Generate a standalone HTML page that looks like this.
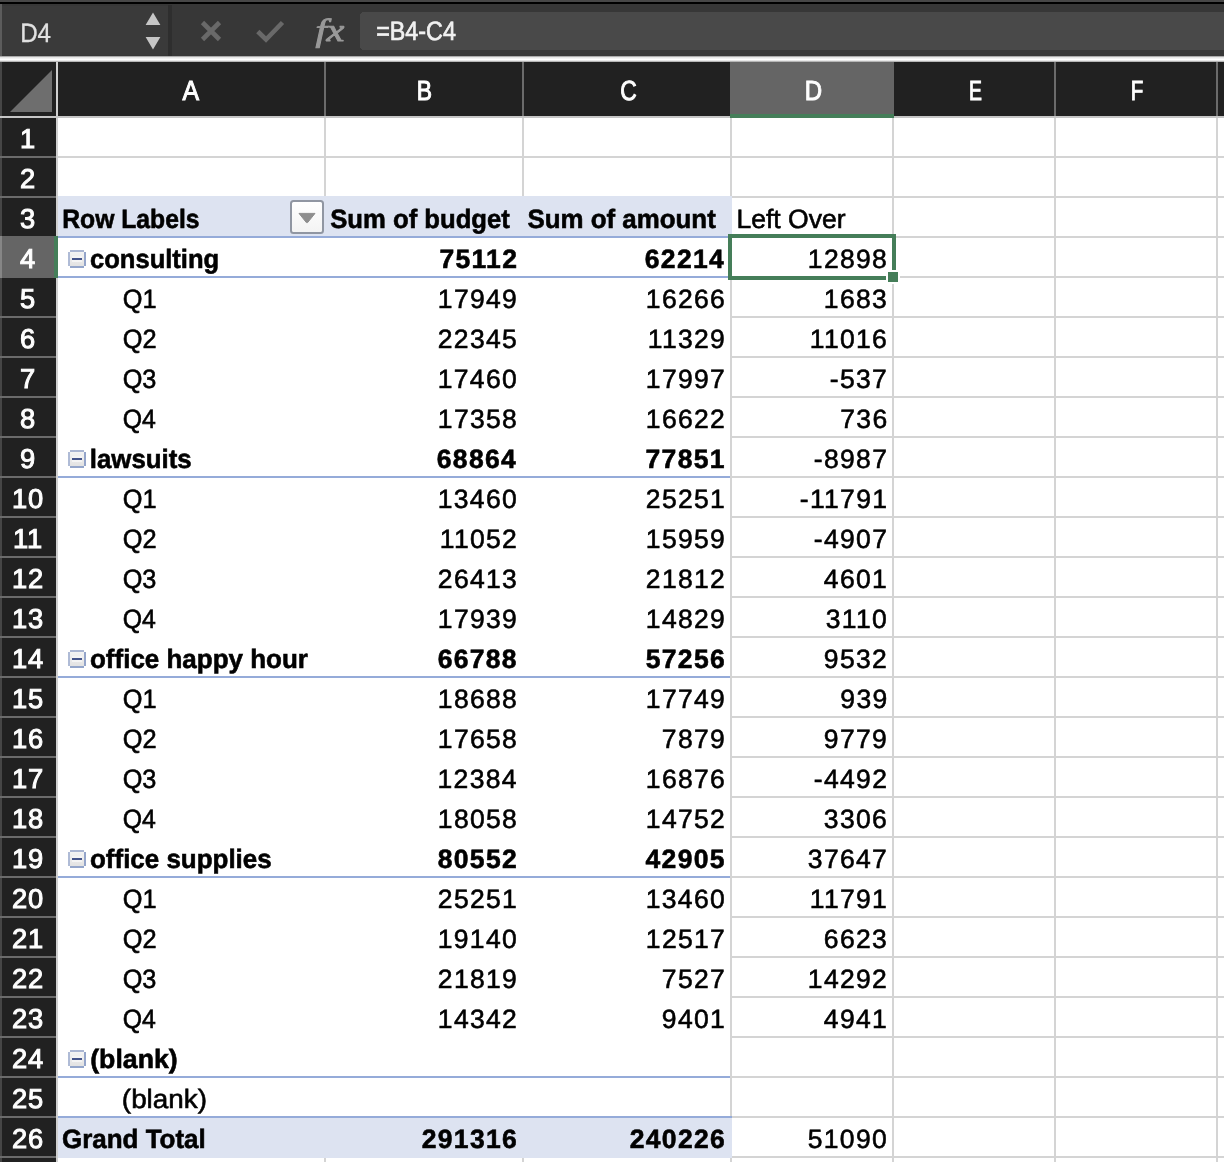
<!DOCTYPE html>
<html lang="en"><head><meta charset="utf-8"><title>Pivot table - Left Over</title>
<style>
html,body{margin:0;padding:0;background:#fff}
body{width:1224px;height:1162px;overflow:hidden;font-family:'Liberation Sans', sans-serif}
svg{display:block}
text{white-space:pre}
.b{font-weight:700}
</style></head><body>
<svg width="1224" height="1162" viewBox="0 0 1224 1162" font-family="'Liberation Sans', sans-serif" text-rendering="geometricPrecision">
<defs>
<linearGradient id="band" x1="0" y1="0" x2="0" y2="1"><stop offset="0" stop-color="#8c8c8c"/><stop offset="0.25" stop-color="#e6e6e6"/><stop offset="0.6" stop-color="#ffffff"/><stop offset="0.85" stop-color="#d8d8d8"/><stop offset="1" stop-color="#8a8a8a"/></linearGradient>
<linearGradient id="fbtn" x1="0" y1="0" x2="0" y2="1"><stop offset="0" stop-color="#ffffff"/><stop offset="1" stop-color="#f3f3f3"/></linearGradient>
<linearGradient id="btn" x1="0" y1="0" x2="0" y2="1"><stop offset="0" stop-color="#f3f3f3"/><stop offset="1" stop-color="#e2e2e2"/></linearGradient>
</defs>
<g shape-rendering="crispEdges">
<rect x="0" y="0" width="1224" height="1162" fill="#ffffff"/>
<rect x="0" y="0" width="1224" height="2" fill="#474747"/>
<rect x="0" y="2" width="1224" height="2" fill="#000000"/>
<rect x="0" y="4" width="1224" height="52" fill="#373737"/>
<rect x="0" y="4" width="2" height="52" fill="#5c5c5c"/>
<rect x="2" y="6" width="166" height="49" fill="#3a3a3a"/>
<rect x="168" y="5" width="4" height="51" fill="#2e2e2e"/>
<path d="M364 12H1224V50H364a4 4 0 0 1-4-4V16a4 4 0 0 1 4-4z" fill="#494949"/>
<rect x="0" y="56" width="1224" height="6" fill="url(#band)"/>
<rect x="0" y="62" width="1224" height="54" fill="#212121"/>
<rect x="0" y="118" width="56" height="1044" fill="#212121"/>
<rect x="0" y="62" width="2" height="1100" fill="#464646"/>
<rect x="56" y="62" width="2" height="1100" fill="#d0d0d0"/>
<rect x="0" y="116" width="1224" height="2" fill="#c6c6c6"/>
<rect x="730" y="62" width="164" height="52" fill="#656565"/>
<rect x="730" y="114" width="164" height="4" fill="#457e59"/>
<rect x="324" y="62" width="2" height="54" fill="#6b6b6b"/>
<rect x="522" y="62" width="2" height="54" fill="#6b6b6b"/>
<rect x="1054" y="62" width="2" height="54" fill="#6b6b6b"/>
<rect x="1216" y="62" width="2" height="54" fill="#6b6b6b"/>
<rect x="0" y="156" width="56" height="2" fill="#6b6b6b"/>
<rect x="0" y="196" width="56" height="2" fill="#6b6b6b"/>
<rect x="0" y="236" width="56" height="2" fill="#6b6b6b"/>
<rect x="0" y="276" width="56" height="2" fill="#6b6b6b"/>
<rect x="0" y="316" width="56" height="2" fill="#6b6b6b"/>
<rect x="0" y="356" width="56" height="2" fill="#6b6b6b"/>
<rect x="0" y="396" width="56" height="2" fill="#6b6b6b"/>
<rect x="0" y="436" width="56" height="2" fill="#6b6b6b"/>
<rect x="0" y="476" width="56" height="2" fill="#6b6b6b"/>
<rect x="0" y="516" width="56" height="2" fill="#6b6b6b"/>
<rect x="0" y="556" width="56" height="2" fill="#6b6b6b"/>
<rect x="0" y="596" width="56" height="2" fill="#6b6b6b"/>
<rect x="0" y="636" width="56" height="2" fill="#6b6b6b"/>
<rect x="0" y="676" width="56" height="2" fill="#6b6b6b"/>
<rect x="0" y="716" width="56" height="2" fill="#6b6b6b"/>
<rect x="0" y="756" width="56" height="2" fill="#6b6b6b"/>
<rect x="0" y="796" width="56" height="2" fill="#6b6b6b"/>
<rect x="0" y="836" width="56" height="2" fill="#6b6b6b"/>
<rect x="0" y="876" width="56" height="2" fill="#6b6b6b"/>
<rect x="0" y="916" width="56" height="2" fill="#6b6b6b"/>
<rect x="0" y="956" width="56" height="2" fill="#6b6b6b"/>
<rect x="0" y="996" width="56" height="2" fill="#6b6b6b"/>
<rect x="0" y="1036" width="56" height="2" fill="#6b6b6b"/>
<rect x="0" y="1076" width="56" height="2" fill="#6b6b6b"/>
<rect x="0" y="1116" width="56" height="2" fill="#6b6b6b"/>
<rect x="0" y="1156" width="56" height="2" fill="#6b6b6b"/>
<rect x="0" y="1196" width="56" height="2" fill="#6b6b6b"/>
<rect x="2" y="236" width="52" height="42" fill="#656565"/>
<rect x="0" y="236" width="2" height="42" fill="#868686"/>
<rect x="54" y="236" width="4" height="42" fill="#457e59"/>
<rect x="324" y="118" width="2" height="1044" fill="#d4d4d4"/>
<rect x="522" y="118" width="2" height="1044" fill="#d4d4d4"/>
<rect x="730" y="118" width="2" height="1044" fill="#d4d4d4"/>
<rect x="892" y="118" width="2" height="1044" fill="#d4d4d4"/>
<rect x="1054" y="118" width="2" height="1044" fill="#d4d4d4"/>
<rect x="1216" y="118" width="2" height="1044" fill="#d4d4d4"/>
<rect x="58" y="156" width="1166" height="2" fill="#d4d4d4"/>
<rect x="58" y="196" width="1166" height="2" fill="#d4d4d4"/>
<rect x="58" y="236" width="1166" height="2" fill="#d4d4d4"/>
<rect x="58" y="276" width="1166" height="2" fill="#d4d4d4"/>
<rect x="58" y="316" width="1166" height="2" fill="#d4d4d4"/>
<rect x="58" y="356" width="1166" height="2" fill="#d4d4d4"/>
<rect x="58" y="396" width="1166" height="2" fill="#d4d4d4"/>
<rect x="58" y="436" width="1166" height="2" fill="#d4d4d4"/>
<rect x="58" y="476" width="1166" height="2" fill="#d4d4d4"/>
<rect x="58" y="516" width="1166" height="2" fill="#d4d4d4"/>
<rect x="58" y="556" width="1166" height="2" fill="#d4d4d4"/>
<rect x="58" y="596" width="1166" height="2" fill="#d4d4d4"/>
<rect x="58" y="636" width="1166" height="2" fill="#d4d4d4"/>
<rect x="58" y="676" width="1166" height="2" fill="#d4d4d4"/>
<rect x="58" y="716" width="1166" height="2" fill="#d4d4d4"/>
<rect x="58" y="756" width="1166" height="2" fill="#d4d4d4"/>
<rect x="58" y="796" width="1166" height="2" fill="#d4d4d4"/>
<rect x="58" y="836" width="1166" height="2" fill="#d4d4d4"/>
<rect x="58" y="876" width="1166" height="2" fill="#d4d4d4"/>
<rect x="58" y="916" width="1166" height="2" fill="#d4d4d4"/>
<rect x="58" y="956" width="1166" height="2" fill="#d4d4d4"/>
<rect x="58" y="996" width="1166" height="2" fill="#d4d4d4"/>
<rect x="58" y="1036" width="1166" height="2" fill="#d4d4d4"/>
<rect x="58" y="1076" width="1166" height="2" fill="#d4d4d4"/>
<rect x="58" y="1116" width="1166" height="2" fill="#d4d4d4"/>
<rect x="58" y="1156" width="1166" height="2" fill="#d4d4d4"/>
<rect x="58" y="238" width="672" height="880" fill="#ffffff"/>
<rect x="58" y="196" width="674" height="40" fill="#dde3f1"/>
<rect x="58" y="1118" width="674" height="40" fill="#dde3f1"/>
<rect x="58" y="236" width="672" height="2" fill="#95abd9"/>
<rect x="58" y="876" width="672" height="2" fill="#95abd9"/>
<rect x="58" y="276" width="672" height="2" fill="#95abd9"/>
<rect x="58" y="1076" width="672" height="2" fill="#95abd9"/>
<rect x="58" y="476" width="672" height="2" fill="#95abd9"/>
<rect x="58" y="676" width="672" height="2" fill="#95abd9"/>
<rect x="58" y="1116" width="674" height="2" fill="#95abd9"/>
<rect x="730" y="236" width="164" height="42" fill="none" stroke="#457e59" stroke-width="4"/>
<rect x="886" y="270" width="14" height="14" fill="#ffffff"/>
<rect x="888" y="272" width="10" height="10" fill="#457e59"/>
</g>
<g>
<path d="M145.6 25L153 12.6L160.4 25z M145.6 37L153 49.4L160.4 37z" fill="#c6c6c6"/>
<path d="M202.5 22.5L219.5 39.5M219.5 22.5L202.5 39.5" stroke="#696969" stroke-width="4.6" fill="none"/>
<path d="M257.8 31.5L266 39.5L282.5 22.5" stroke="#696969" stroke-width="4.6" fill="none"/>
<path d="M10 112L52 70V112z" fill="#6e6e6e"/>
<rect x="291" y="201" width="32" height="32" rx="2.5" fill="url(#fbtn)" stroke="#9096a2" stroke-width="2"/>
<path d="M299 213.4H315L307.6 222.6H306.4z" fill="#8e8e8e" stroke="#8e8e8e" stroke-width="1" stroke-linejoin="round"/>
<g transform="translate(68 250)" shape-rendering="crispEdges"><rect x="2" y="2" width="14" height="14" fill="url(#btn)"/><rect x="2" y="0" width="14" height="2" fill="#aab6d2"/><rect x="2" y="16" width="14" height="2" fill="#93a5ca"/><rect x="0" y="2" width="2" height="14" fill="#afbbd6"/><rect x="16" y="2" width="2" height="14" fill="#94a5ca"/><rect x="4" y="6" width="10" height="6" fill="#f4f4f4"/><rect x="4" y="8" width="10" height="2" fill="#44548a"/></g>
<g transform="translate(68 450)" shape-rendering="crispEdges"><rect x="2" y="2" width="14" height="14" fill="url(#btn)"/><rect x="2" y="0" width="14" height="2" fill="#aab6d2"/><rect x="2" y="16" width="14" height="2" fill="#93a5ca"/><rect x="0" y="2" width="2" height="14" fill="#afbbd6"/><rect x="16" y="2" width="2" height="14" fill="#94a5ca"/><rect x="4" y="6" width="10" height="6" fill="#f4f4f4"/><rect x="4" y="8" width="10" height="2" fill="#44548a"/></g>
<g transform="translate(68 650)" shape-rendering="crispEdges"><rect x="2" y="2" width="14" height="14" fill="url(#btn)"/><rect x="2" y="0" width="14" height="2" fill="#aab6d2"/><rect x="2" y="16" width="14" height="2" fill="#93a5ca"/><rect x="0" y="2" width="2" height="14" fill="#afbbd6"/><rect x="16" y="2" width="2" height="14" fill="#94a5ca"/><rect x="4" y="6" width="10" height="6" fill="#f4f4f4"/><rect x="4" y="8" width="10" height="2" fill="#44548a"/></g>
<g transform="translate(68 850)" shape-rendering="crispEdges"><rect x="2" y="2" width="14" height="14" fill="url(#btn)"/><rect x="2" y="0" width="14" height="2" fill="#aab6d2"/><rect x="2" y="16" width="14" height="2" fill="#93a5ca"/><rect x="0" y="2" width="2" height="14" fill="#afbbd6"/><rect x="16" y="2" width="2" height="14" fill="#94a5ca"/><rect x="4" y="6" width="10" height="6" fill="#f4f4f4"/><rect x="4" y="8" width="10" height="2" fill="#44548a"/></g>
<g transform="translate(68 1050)" shape-rendering="crispEdges"><rect x="2" y="2" width="14" height="14" fill="url(#btn)"/><rect x="2" y="0" width="14" height="2" fill="#aab6d2"/><rect x="2" y="16" width="14" height="2" fill="#93a5ca"/><rect x="0" y="2" width="2" height="14" fill="#afbbd6"/><rect x="16" y="2" width="2" height="14" fill="#94a5ca"/><rect x="4" y="6" width="10" height="6" fill="#f4f4f4"/><rect x="4" y="8" width="10" height="2" fill="#44548a"/></g>
</g>
<g opacity="0.999">
<text transform="translate(62.24 227.5) scale(0.9289 1)" font-size="26.6" stroke="#000" stroke-width="0.6" class="b">Row Labels</text>
<text transform="translate(330.26 227.5) scale(0.9644 1)" font-size="26.6" stroke="#000" stroke-width="0.6" class="b">Sum of budget</text>
<text transform="translate(527.56 227.5) scale(0.9724 1)" font-size="26.6" stroke="#000" stroke-width="0.6" class="b">Sum of amount</text>
<text transform="translate(736.44 227.5) scale(0.9983 1)" font-size="26.6" stroke="#000" stroke-width="0.6">Left Over</text>
<text transform="translate(90.01 267.5) scale(0.9605 1)" font-size="26.6" stroke="#000" stroke-width="0.6" class="b">consulting</text>
<text transform="translate(439.40 267.5)" font-size="26.5" letter-spacing="1.31" stroke="#000" stroke-width="0.6" class="b">75112</text>
<text transform="translate(644.80 267.5)" font-size="26.5" letter-spacing="1.31" stroke="#000" stroke-width="0.6" class="b">62214</text>
<text transform="translate(807.83 267.5)" font-size="26.5" letter-spacing="1.31" stroke="#000" stroke-width="0.6">12898</text>
<text transform="translate(122.66 307.5) scale(0.9539 1)" font-size="26.6" stroke="#000" stroke-width="0.6">Q1</text>
<text transform="translate(437.85 307.5)" font-size="26.5" letter-spacing="1.31" stroke="#000" stroke-width="0.6">17949</text>
<text transform="translate(645.83 307.5)" font-size="26.5" letter-spacing="1.31" stroke="#000" stroke-width="0.6">16266</text>
<text transform="translate(823.83 307.5)" font-size="26.5" letter-spacing="1.31" stroke="#000" stroke-width="0.6">1683</text>
<text transform="translate(122.66 347.5) scale(0.9543 1)" font-size="26.6" stroke="#000" stroke-width="0.6">Q2</text>
<text transform="translate(437.80 347.5)" font-size="26.5" letter-spacing="1.31" stroke="#000" stroke-width="0.6">22345</text>
<text transform="translate(647.85 347.5)" font-size="26.5" letter-spacing="1.31" stroke="#000" stroke-width="0.6">11329</text>
<text transform="translate(809.83 347.5)" font-size="26.5" letter-spacing="1.31" stroke="#000" stroke-width="0.6">11016</text>
<text transform="translate(122.66 387.5) scale(0.9514 1)" font-size="26.6" stroke="#000" stroke-width="0.6">Q3</text>
<text transform="translate(437.76 387.5)" font-size="26.5" letter-spacing="1.31" stroke="#000" stroke-width="0.6">17460</text>
<text transform="translate(645.87 387.5)" font-size="26.5" letter-spacing="1.31" stroke="#000" stroke-width="0.6">17997</text>
<text transform="translate(829.87 387.5)" font-size="26.5" letter-spacing="1.31" stroke="#000" stroke-width="0.6">-537</text>
<text transform="translate(122.68 427.5) scale(0.9338 1)" font-size="26.6" stroke="#000" stroke-width="0.6">Q4</text>
<text transform="translate(437.83 427.5)" font-size="26.5" letter-spacing="1.31" stroke="#000" stroke-width="0.6">17358</text>
<text transform="translate(645.87 427.5)" font-size="26.5" letter-spacing="1.31" stroke="#000" stroke-width="0.6">16622</text>
<text transform="translate(840.29 427.5)" font-size="26.5" letter-spacing="1.31" stroke="#000" stroke-width="0.6">736</text>
<text transform="translate(89.82 467.5) scale(0.9707 1)" font-size="26.6" stroke="#000" stroke-width="0.6" class="b">lawsuits</text>
<text transform="translate(436.80 467.5)" font-size="26.5" letter-spacing="1.31" stroke="#000" stroke-width="0.6" class="b">68864</text>
<text transform="translate(645.54 467.5)" font-size="26.5" letter-spacing="1.31" stroke="#000" stroke-width="0.6" class="b">77851</text>
<text transform="translate(813.87 467.5)" font-size="26.5" letter-spacing="1.31" stroke="#000" stroke-width="0.6">-8987</text>
<text transform="translate(122.66 507.5) scale(0.9539 1)" font-size="26.6" stroke="#000" stroke-width="0.6">Q1</text>
<text transform="translate(437.76 507.5)" font-size="26.5" letter-spacing="1.31" stroke="#000" stroke-width="0.6">13460</text>
<text transform="translate(645.86 507.5)" font-size="26.5" letter-spacing="1.31" stroke="#000" stroke-width="0.6">25251</text>
<text transform="translate(799.86 507.5)" font-size="26.5" letter-spacing="1.31" stroke="#000" stroke-width="0.6">-11791</text>
<text transform="translate(122.66 547.5) scale(0.9543 1)" font-size="26.6" stroke="#000" stroke-width="0.6">Q2</text>
<text transform="translate(439.87 547.5)" font-size="26.5" letter-spacing="1.31" stroke="#000" stroke-width="0.6">11052</text>
<text transform="translate(645.85 547.5)" font-size="26.5" letter-spacing="1.31" stroke="#000" stroke-width="0.6">15959</text>
<text transform="translate(813.87 547.5)" font-size="26.5" letter-spacing="1.31" stroke="#000" stroke-width="0.6">-4907</text>
<text transform="translate(122.66 587.5) scale(0.9514 1)" font-size="26.6" stroke="#000" stroke-width="0.6">Q3</text>
<text transform="translate(437.83 587.5)" font-size="26.5" letter-spacing="1.31" stroke="#000" stroke-width="0.6">26413</text>
<text transform="translate(645.87 587.5)" font-size="26.5" letter-spacing="1.31" stroke="#000" stroke-width="0.6">21812</text>
<text transform="translate(823.86 587.5)" font-size="26.5" letter-spacing="1.31" stroke="#000" stroke-width="0.6">4601</text>
<text transform="translate(122.68 627.5) scale(0.9338 1)" font-size="26.6" stroke="#000" stroke-width="0.6">Q4</text>
<text transform="translate(437.85 627.5)" font-size="26.5" letter-spacing="1.31" stroke="#000" stroke-width="0.6">17939</text>
<text transform="translate(645.85 627.5)" font-size="26.5" letter-spacing="1.31" stroke="#000" stroke-width="0.6">14829</text>
<text transform="translate(825.76 627.5)" font-size="26.5" letter-spacing="1.31" stroke="#000" stroke-width="0.6">3110</text>
<text transform="translate(90.00 667.5) scale(0.9769 1)" font-size="26.6" stroke="#000" stroke-width="0.6" class="b">office happy hour</text>
<text transform="translate(437.63 667.5)" font-size="26.5" letter-spacing="1.31" stroke="#000" stroke-width="0.6" class="b">66788</text>
<text transform="translate(645.74 667.5)" font-size="26.5" letter-spacing="1.31" stroke="#000" stroke-width="0.6" class="b">57256</text>
<text transform="translate(823.87 667.5)" font-size="26.5" letter-spacing="1.31" stroke="#000" stroke-width="0.6">9532</text>
<text transform="translate(122.66 707.5) scale(0.9539 1)" font-size="26.6" stroke="#000" stroke-width="0.6">Q1</text>
<text transform="translate(437.83 707.5)" font-size="26.5" letter-spacing="1.31" stroke="#000" stroke-width="0.6">18688</text>
<text transform="translate(645.85 707.5)" font-size="26.5" letter-spacing="1.31" stroke="#000" stroke-width="0.6">17749</text>
<text transform="translate(840.36 707.5)" font-size="26.5" letter-spacing="1.31" stroke="#000" stroke-width="0.6">939</text>
<text transform="translate(122.66 747.5) scale(0.9543 1)" font-size="26.6" stroke="#000" stroke-width="0.6">Q2</text>
<text transform="translate(437.83 747.5)" font-size="26.5" letter-spacing="1.31" stroke="#000" stroke-width="0.6">17658</text>
<text transform="translate(661.85 747.5)" font-size="26.5" letter-spacing="1.31" stroke="#000" stroke-width="0.6">7879</text>
<text transform="translate(823.85 747.5)" font-size="26.5" letter-spacing="1.31" stroke="#000" stroke-width="0.6">9779</text>
<text transform="translate(122.66 787.5) scale(0.9514 1)" font-size="26.6" stroke="#000" stroke-width="0.6">Q3</text>
<text transform="translate(437.57 787.5)" font-size="26.5" letter-spacing="1.31" stroke="#000" stroke-width="0.6">12384</text>
<text transform="translate(645.83 787.5)" font-size="26.5" letter-spacing="1.31" stroke="#000" stroke-width="0.6">16876</text>
<text transform="translate(813.87 787.5)" font-size="26.5" letter-spacing="1.31" stroke="#000" stroke-width="0.6">-4492</text>
<text transform="translate(122.68 827.5) scale(0.9338 1)" font-size="26.6" stroke="#000" stroke-width="0.6">Q4</text>
<text transform="translate(437.83 827.5)" font-size="26.5" letter-spacing="1.31" stroke="#000" stroke-width="0.6">18058</text>
<text transform="translate(645.87 827.5)" font-size="26.5" letter-spacing="1.31" stroke="#000" stroke-width="0.6">14752</text>
<text transform="translate(823.83 827.5)" font-size="26.5" letter-spacing="1.31" stroke="#000" stroke-width="0.6">3306</text>
<text transform="translate(90.00 867.5) scale(0.9758 1)" font-size="26.6" stroke="#000" stroke-width="0.6" class="b">office supplies</text>
<text transform="translate(437.76 867.5)" font-size="26.5" letter-spacing="1.31" stroke="#000" stroke-width="0.6" class="b">80552</text>
<text transform="translate(645.57 867.5)" font-size="26.5" letter-spacing="1.31" stroke="#000" stroke-width="0.6" class="b">42905</text>
<text transform="translate(807.87 867.5)" font-size="26.5" letter-spacing="1.31" stroke="#000" stroke-width="0.6">37647</text>
<text transform="translate(122.66 907.5) scale(0.9539 1)" font-size="26.6" stroke="#000" stroke-width="0.6">Q1</text>
<text transform="translate(437.86 907.5)" font-size="26.5" letter-spacing="1.31" stroke="#000" stroke-width="0.6">25251</text>
<text transform="translate(645.76 907.5)" font-size="26.5" letter-spacing="1.31" stroke="#000" stroke-width="0.6">13460</text>
<text transform="translate(809.86 907.5)" font-size="26.5" letter-spacing="1.31" stroke="#000" stroke-width="0.6">11791</text>
<text transform="translate(122.66 947.5) scale(0.9543 1)" font-size="26.6" stroke="#000" stroke-width="0.6">Q2</text>
<text transform="translate(437.76 947.5)" font-size="26.5" letter-spacing="1.31" stroke="#000" stroke-width="0.6">19140</text>
<text transform="translate(645.87 947.5)" font-size="26.5" letter-spacing="1.31" stroke="#000" stroke-width="0.6">12517</text>
<text transform="translate(823.83 947.5)" font-size="26.5" letter-spacing="1.31" stroke="#000" stroke-width="0.6">6623</text>
<text transform="translate(122.66 987.5) scale(0.9514 1)" font-size="26.6" stroke="#000" stroke-width="0.6">Q3</text>
<text transform="translate(437.85 987.5)" font-size="26.5" letter-spacing="1.31" stroke="#000" stroke-width="0.6">21819</text>
<text transform="translate(661.87 987.5)" font-size="26.5" letter-spacing="1.31" stroke="#000" stroke-width="0.6">7527</text>
<text transform="translate(807.87 987.5)" font-size="26.5" letter-spacing="1.31" stroke="#000" stroke-width="0.6">14292</text>
<text transform="translate(122.68 1027.5) scale(0.9338 1)" font-size="26.6" stroke="#000" stroke-width="0.6">Q4</text>
<text transform="translate(437.87 1027.5)" font-size="26.5" letter-spacing="1.31" stroke="#000" stroke-width="0.6">14342</text>
<text transform="translate(661.86 1027.5)" font-size="26.5" letter-spacing="1.31" stroke="#000" stroke-width="0.6">9401</text>
<text transform="translate(823.86 1027.5)" font-size="26.5" letter-spacing="1.31" stroke="#000" stroke-width="0.6">4941</text>
<text transform="translate(90.21 1067.5) scale(1.0038 1)" font-size="26.6" stroke="#000" stroke-width="0.6" class="b">(blank)</text>
<text transform="translate(121.85 1107.5) scale(1.0474 1)" font-size="26.6" stroke="#000" stroke-width="0.6">(blank)</text>
<text transform="translate(61.98 1147.5) scale(0.9764 1)" font-size="26.6" stroke="#000" stroke-width="0.6" class="b">Grand Total</text>
<text transform="translate(421.74 1147.5)" font-size="26.5" letter-spacing="1.31" stroke="#000" stroke-width="0.6" class="b">291316</text>
<text transform="translate(629.74 1147.5)" font-size="26.5" letter-spacing="1.31" stroke="#000" stroke-width="0.6" class="b">240226</text>
<text transform="translate(807.76 1147.5)" font-size="26.5" letter-spacing="1.31" stroke="#000" stroke-width="0.6">51090</text>
<text transform="translate(20.01 147.6)" font-size="27.3" letter-spacing="0.77" stroke="#fff" stroke-width="1.0" fill="#fff">1</text>
<text transform="translate(20.01 187.6)" font-size="27.3" letter-spacing="0.77" stroke="#fff" stroke-width="1.0" fill="#fff">2</text>
<text transform="translate(20.01 227.6)" font-size="27.3" letter-spacing="0.77" stroke="#fff" stroke-width="1.0" fill="#fff">3</text>
<text transform="translate(20.01 267.6)" font-size="27.3" letter-spacing="0.77" stroke="#fff" stroke-width="1.0" fill="#fff">4</text>
<text transform="translate(20.01 307.6)" font-size="27.3" letter-spacing="0.77" stroke="#fff" stroke-width="1.0" fill="#fff">5</text>
<text transform="translate(20.01 347.6)" font-size="27.3" letter-spacing="0.77" stroke="#fff" stroke-width="1.0" fill="#fff">6</text>
<text transform="translate(20.01 387.6)" font-size="27.3" letter-spacing="0.77" stroke="#fff" stroke-width="1.0" fill="#fff">7</text>
<text transform="translate(20.01 427.6)" font-size="27.3" letter-spacing="0.77" stroke="#fff" stroke-width="1.0" fill="#fff">8</text>
<text transform="translate(20.01 467.6)" font-size="27.3" letter-spacing="0.77" stroke="#fff" stroke-width="1.0" fill="#fff">9</text>
<text transform="translate(12.03 507.6)" font-size="27.3" letter-spacing="0.77" stroke="#fff" stroke-width="1.0" fill="#fff">10</text>
<text transform="translate(13.04 547.6)" font-size="27.3" letter-spacing="0.77" stroke="#fff" stroke-width="1.0" fill="#fff">11</text>
<text transform="translate(12.03 587.6)" font-size="27.3" letter-spacing="0.77" stroke="#fff" stroke-width="1.0" fill="#fff">12</text>
<text transform="translate(12.03 627.6)" font-size="27.3" letter-spacing="0.77" stroke="#fff" stroke-width="1.0" fill="#fff">13</text>
<text transform="translate(12.03 667.6)" font-size="27.3" letter-spacing="0.77" stroke="#fff" stroke-width="1.0" fill="#fff">14</text>
<text transform="translate(12.03 707.6)" font-size="27.3" letter-spacing="0.77" stroke="#fff" stroke-width="1.0" fill="#fff">15</text>
<text transform="translate(12.03 747.6)" font-size="27.3" letter-spacing="0.77" stroke="#fff" stroke-width="1.0" fill="#fff">16</text>
<text transform="translate(12.03 787.6)" font-size="27.3" letter-spacing="0.77" stroke="#fff" stroke-width="1.0" fill="#fff">17</text>
<text transform="translate(12.03 827.6)" font-size="27.3" letter-spacing="0.77" stroke="#fff" stroke-width="1.0" fill="#fff">18</text>
<text transform="translate(12.03 867.6)" font-size="27.3" letter-spacing="0.77" stroke="#fff" stroke-width="1.0" fill="#fff">19</text>
<text transform="translate(12.03 907.6)" font-size="27.3" letter-spacing="0.77" stroke="#fff" stroke-width="1.0" fill="#fff">20</text>
<text transform="translate(12.03 947.6)" font-size="27.3" letter-spacing="0.77" stroke="#fff" stroke-width="1.0" fill="#fff">21</text>
<text transform="translate(12.03 987.6)" font-size="27.3" letter-spacing="0.77" stroke="#fff" stroke-width="1.0" fill="#fff">22</text>
<text transform="translate(12.03 1027.6)" font-size="27.3" letter-spacing="0.77" stroke="#fff" stroke-width="1.0" fill="#fff">23</text>
<text transform="translate(12.03 1067.6)" font-size="27.3" letter-spacing="0.77" stroke="#fff" stroke-width="1.0" fill="#fff">24</text>
<text transform="translate(12.03 1107.6)" font-size="27.3" letter-spacing="0.77" stroke="#fff" stroke-width="1.0" fill="#fff">25</text>
<text transform="translate(12.03 1147.6)" font-size="27.3" letter-spacing="0.77" stroke="#fff" stroke-width="1.0" fill="#fff">26</text>
<text transform="translate(182.48 99.7) scale(0.8989 1)" font-size="27.7" stroke="#fff" stroke-width="1.0" fill="#fff">A</text>
<text transform="translate(416.79 99.7) scale(0.8280 1)" font-size="27.7" stroke="#fff" stroke-width="1.0" fill="#fff">B</text>
<text transform="translate(620.30 99.7) scale(0.8231 1)" font-size="27.7" stroke="#fff" stroke-width="1.0" fill="#fff">C</text>
<text transform="translate(804.73 99.7) scale(0.8692 1)" font-size="27.7" stroke="#fff" stroke-width="1.0" fill="#fff">D</text>
<text transform="translate(969.07 99.7) scale(0.7004 1)" font-size="27.7" stroke="#fff" stroke-width="1.0" fill="#fff">E</text>
<text transform="translate(1130.81 99.7) scale(0.7412 1)" font-size="27.7" stroke="#fff" stroke-width="1.0" fill="#fff">F</text>
<text transform="translate(20.17 42) scale(0.9118 1)" font-size="26.5" stroke="#e2e2e2" stroke-width="0.3" fill="#e2e2e2">D4</text>
<text transform="translate(376.16 40) scale(0.8799 1)" font-size="26.5" stroke="#f2f2f2" stroke-width="0.7" fill="#f2f2f2">=B4-C4</text>
<text transform="translate(315.44 40.5) scale(1.2545 1)" font-size="32" font-family="'Liberation Serif', serif" font-style="italic" stroke="#9a9a9a" stroke-width="0.9" fill="#9a9a9a">fx</text>
</g>
</svg>
</body></html>
